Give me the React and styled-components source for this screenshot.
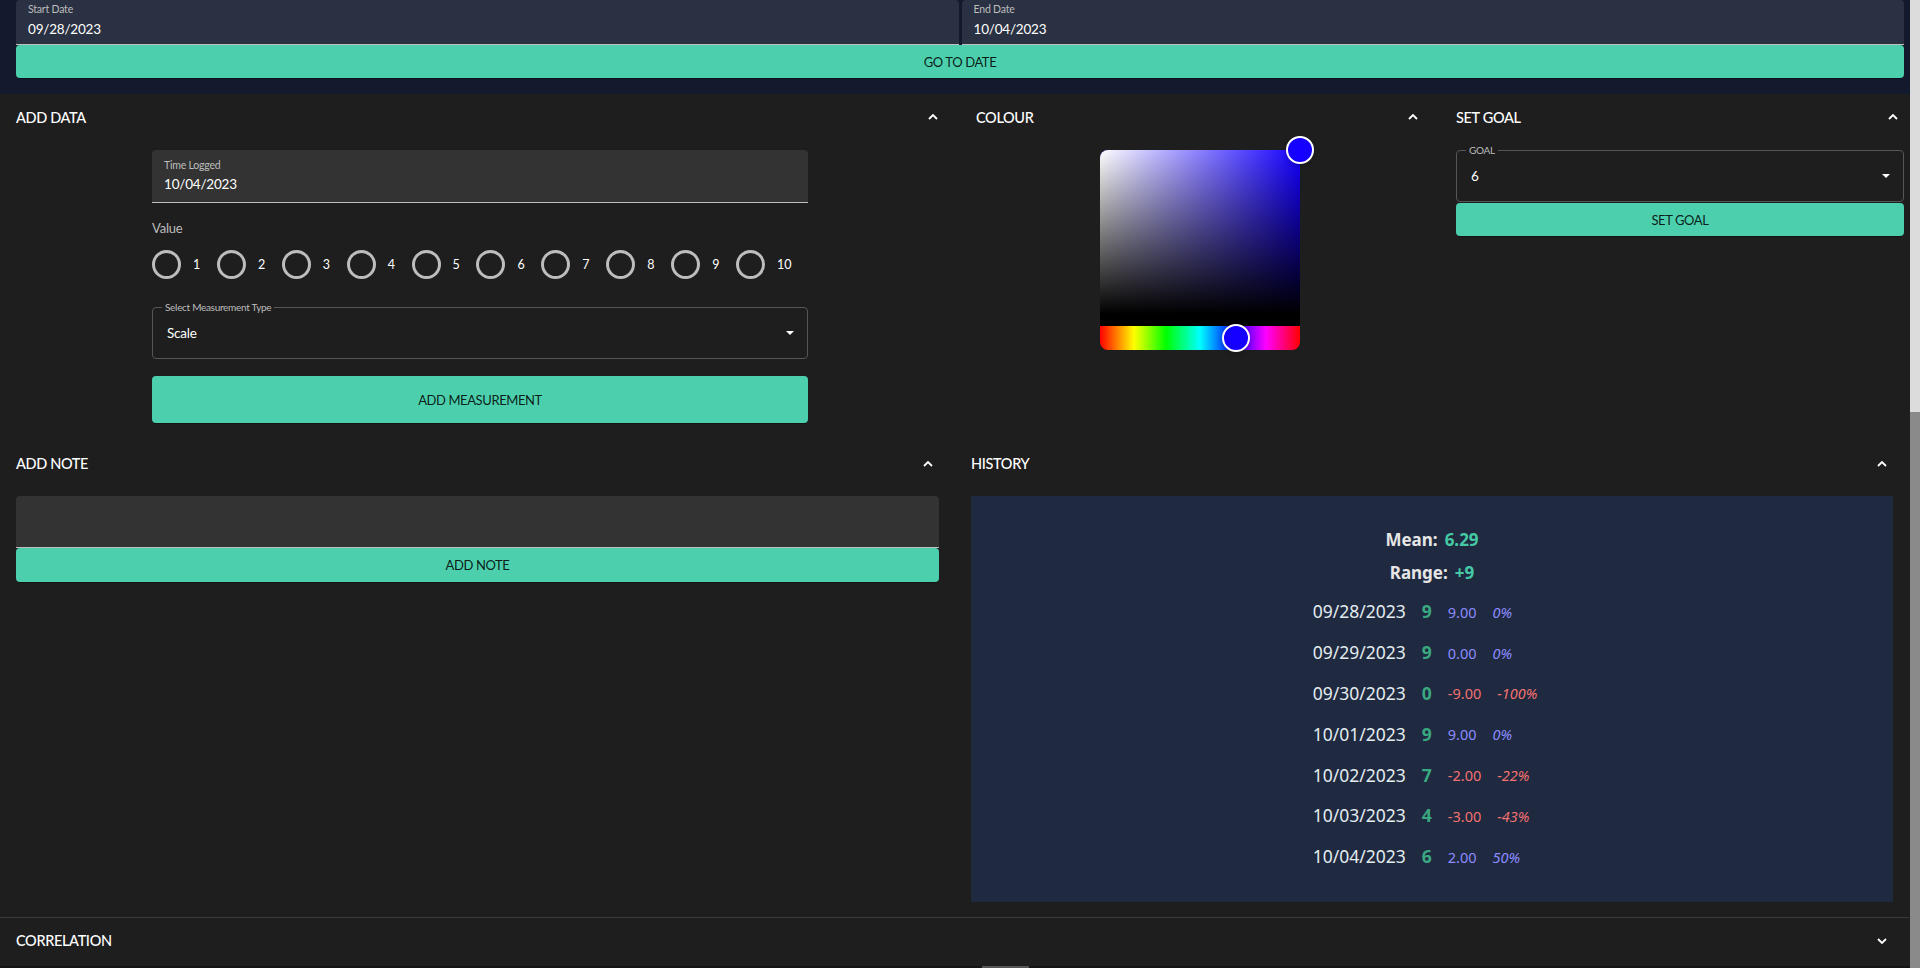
import React from "react";
import styled, { createGlobalStyle, css } from "styled-components";

const GlobalStyle = createGlobalStyle`
  html, body { margin: 0; padding: 0; background: #1e1e1e; overflow: hidden; }
  body { font-family: "Liberation Sans Narrow", "Lato", sans-serif; color: #fff; }
  * { box-sizing: border-box; }
`;

const Page = styled.div`
  width: 1920px;
  height: 968px;
  overflow: hidden;
  background: #1e1e1e;
`;

const DateBar = styled.div`
  background: #131a2e;
  padding: 0 16px 16px;
`;

const DateGrid = styled.div`
  display: grid;
  grid-template-columns: 1fr 1fr;
  column-gap: 3px;
`;

const FilledField = styled.div`
  display: flex;
  flex-direction: column;
  height: ${(p) => p.$h}px;
  padding: ${(p) => p.$pt}px 12px 0;
  background: ${(p) => (p.$tone === "navy" ? "#2a3142" : "#333333")};
  border-bottom: 1px solid #bdbdbd;
  border-radius: 4px 4px 0 0;
`;

const FieldLabel = styled.span`
  font-size: 10.5px;
  line-height: 12px;
  letter-spacing: -0.2px;
  color: #bdbdbd;
`;

const FieldValue = styled.span`
  font-size: 13.5px;
  line-height: 16px;
  letter-spacing: -0.2px;
  margin-top: ${(p) => p.$mt}px;
  color: #fff;
`;

const Button = styled.button`
  display: flex;
  align-items: center;
  justify-content: center;
  width: 100%;
  height: ${(p) => p.$h}px;
  margin-top: ${(p) => p.$mt || 0}px;
  border: none;
  border-radius: 4px;
  background: #4ccfad;
  color: rgba(0, 0, 0, 0.87);
  font-family: inherit;
  font-size: 13px;
  letter-spacing: -0.4px;
  text-transform: uppercase;
  box-shadow: 0 2px 1px -1px rgba(0, 0, 0, 0.2), 0 1px 1px rgba(0, 0, 0, 0.14);
  cursor: pointer;
`;

const TopRow = styled.div`
  display: grid;
  grid-template-columns: 960px 480px 480px;
`;

const MidRow = styled.div`
  display: grid;
  grid-template-columns: 955px 954px;
`;

const Panel = styled.section`
  display: flex;
  flex-direction: column;
  min-width: 0;
  ${(p) =>
    p.$divider &&
    css`
      border-top: 1px solid #3a3a3a;
      width: 1909px;
    `}
`;

const PanelHeader = styled.div`
  display: flex;
  align-items: center;
  justify-content: space-between;
  height: ${(p) => p.$h || 46}px;
  padding: 0 22px 0 16px;
`;

const Title = styled.h2`
  margin: 0;
  font-size: 14.5px;
  font-weight: 500;
  letter-spacing: -0.35px;
  color: #fff;
  text-transform: uppercase;
`;

const PanelBody = styled.div`
  padding: 10px 16px ${(p) => p.$pb || 16}px;
`;

const Centered = styled.div`
  width: ${(p) => p.$w}px;
  margin: 0 auto;
  display: flex;
  flex-direction: column;
`;

const SectionLabel = styled.span`
  margin-top: 15px;
  font-size: 13px;
  line-height: 20px;
  letter-spacing: -0.2px;
  color: #bdbdbd;
`;

const RadioRow = styled.div`
  display: flex;
  align-items: center;
  height: 42px;
  margin-top: 5px;
`;

const RadioItem = styled.label`
  display: flex;
  align-items: center;
  width: 64.9px;
  flex: none;
`;

const RadioCircle = styled.span`
  width: 29px;
  height: 29px;
  flex: none;
  border: 3px solid #bdbdbd;
  border-radius: 50%;
`;

const RadioText = styled.span`
  margin-left: 12px;
  font-size: 12.5px;
  color: #fff;
`;

const OutlinedSelect = styled.div`
  position: relative;
  display: flex;
  align-items: center;
  justify-content: space-between;
  height: 52px;
  margin-top: ${(p) => p.$mt || 0}px;
  padding: 0 14px;
  border: 1px solid #555555;
  border-radius: 4px;
`;

const NotchLabel = styled.span`
  position: absolute;
  top: -7px;
  left: 9px;
  padding: 0 3px;
  background: #1e1e1e;
  font-size: 10px;
  line-height: 12px;
  letter-spacing: -0.3px;
  color: #bdbdbd;
`;

const SelectValue = styled.span`
  font-size: 13.5px;
  letter-spacing: -0.2px;
  color: #fff;
`;

const Caret = styled.svg`
  flex: none;
  margin-right: -1px;
`;

const PickerWrap = styled.div`
  width: 200px;
  height: 200px;
  margin: 0 auto;
  display: flex;
  flex-direction: column;
`;

const Saturation = styled.div`
  position: relative;
  flex: 1;
  border-radius: 8px 8px 0 0;
  border-bottom: 12px solid #000;
  background: linear-gradient(to top, #000, rgba(0, 0, 0, 0)),
    linear-gradient(to right, #fff, rgba(255, 255, 255, 0)), ${(p) => p.$base};
`;

const HueBar = styled.div`
  position: relative;
  height: 24px;
  border-radius: 0 0 8px 8px;
  background: linear-gradient(
    to right,
    #f00 0%,
    #ff0 17%,
    #0f0 33%,
    #0ff 50%,
    #00f 67%,
    #f0f 83%,
    #f00 100%
  );
`;

const Pointer = styled.span`
  position: absolute;
  z-index: 2;
  width: 28px;
  height: 28px;
  transform: translate(-50%, -50%);
  border: 2px solid #fff;
  border-radius: 50%;
  box-shadow: 0 2px 4px rgba(0, 0, 0, 0.2);
  background: ${(p) => p.$color};
`;

const NoteArea = styled.div`
  height: 52px;
  background: #333333;
  border-bottom: 1px solid #bdbdbd;
  border-radius: 4px 4px 0 0;
`;

const StatsBox = styled.div`
  height: 406px;
  background: #1f2940;
  padding-top: 27px;
  display: flex;
  flex-direction: column;
  align-items: center;
  font-family: "Noto Sans", "Open Sans", sans-serif;
`;

const StatLine = styled.div`
  line-height: 33px;
  font-size: 17px;
  font-weight: 700;
  color: #e6e6e6;
`;

const StatValue = styled.span`
  margin-left: 7px;
  color: #45c9a5;
`;

const RowList = styled.div`
  margin-top: 2px;
  padding-right: 14px;
  display: flex;
  flex-direction: column;
  align-items: flex-start;
`;

const HistRow = styled.div`
  display: flex;
  align-items: center;
  height: 40.8px;
`;

const HistDate = styled.span`
  font-size: 17.5px;
  line-height: 24px;
  color: #e3ecef;
`;

const HistVal = styled.span`
  margin-left: 16px;
  font-size: 17.5px;
  line-height: 24px;
  font-weight: 700;
  color: #3aa880;
`;

const HistDiff = styled.span`
  margin-left: 16px;
  font-size: 14.5px;
  line-height: 24px;
  padding-top: 1px;
  font-style: ${(p) => (p.$italic ? "italic" : "normal")};
  color: ${(p) => (p.$neg ? "#f2726f" : "#8c8cff")};
`;

const ScrollTrack = styled.div`
  position: fixed;
  top: 0;
  right: 0;
  width: 10px;
  height: 968px;
  background: #dcdcdc;
  z-index: 10;
`;

const ScrollThumb = styled.div`
  position: absolute;
  left: 0;
  right: 0;
  top: 412px;
  bottom: 0;
  background: #8a8a8a;
`;

const HScroll = styled.div`
  position: fixed;
  left: 0;
  bottom: 0;
  width: 1910px;
  height: 2px;
  background: #141414;
  z-index: 10;
`;

const HThumb = styled.div`
  position: absolute;
  left: 982px;
  top: 0;
  width: 47px;
  height: 2px;
  background: #555;
`;

const Chevron = ({ down }) => (
  <svg width="10" height="6" viewBox="0 0 10 6" aria-hidden="true">
    <polyline
      points={down ? "1,1 5,5 9,1" : "1,5 5,1 9,5"}
      fill="none"
      stroke="#fff"
      strokeWidth="1.8"
    />
  </svg>
);

const DropCaret = () => (
  <Caret width="8" height="4" viewBox="0 0 8 4" aria-hidden="true">
    <polygon points="0,0 8,0 4,4" fill="#fff" />
  </Caret>
);

const history = [
  { d: "09/28/2023", v: 9, diff: "9.00", pct: "0%", neg: false },
  { d: "09/29/2023", v: 9, diff: "0.00", pct: "0%", neg: false },
  { d: "09/30/2023", v: 0, diff: "-9.00", pct: "-100%", neg: true },
  { d: "10/01/2023", v: 9, diff: "9.00", pct: "0%", neg: false },
  { d: "10/02/2023", v: 7, diff: "-2.00", pct: "-22%", neg: true },
  { d: "10/03/2023", v: 4, diff: "-3.00", pct: "-43%", neg: true },
  { d: "10/04/2023", v: 6, diff: "2.00", pct: "50%", neg: false },
];

const hue = 245;
const pickColor = `hsl(${hue}, 100%, 50%)`;

export default function App() {
  return (
    <Page>
      <GlobalStyle />
      <DateBar>
        <DateGrid>
          <FilledField $tone="navy" $h={45} $pt={3}>
            <FieldLabel>Start Date</FieldLabel>
            <FieldValue $mt={6}>09/28/2023</FieldValue>
          </FilledField>
          <FilledField $tone="navy" $h={45} $pt={3}>
            <FieldLabel>End Date</FieldLabel>
            <FieldValue $mt={6}>10/04/2023</FieldValue>
          </FilledField>
        </DateGrid>
        <Button $h={33}>Go to date</Button>
      </DateBar>

      <TopRow>
        <Panel>
          <PanelHeader>
            <Title>Add Data</Title>
            <Chevron />
          </PanelHeader>
          <PanelBody $pb={18}>
            <Centered $w={656}>
              <FilledField $h={53} $pt={9}>
                <FieldLabel>Time Logged</FieldLabel>
                <FieldValue $mt={5}>10/04/2023</FieldValue>
              </FilledField>
              <SectionLabel>Value</SectionLabel>
              <RadioRow>
                {[1, 2, 3, 4, 5, 6, 7, 8, 9, 10].map((n) => (
                  <RadioItem key={n}>
                    <RadioCircle />
                    <RadioText>{n}</RadioText>
                  </RadioItem>
                ))}
              </RadioRow>
              <OutlinedSelect $mt={22}>
                <NotchLabel>Select Measurement Type</NotchLabel>
                <SelectValue>Scale</SelectValue>
                <DropCaret />
              </OutlinedSelect>
              <Button $h={47} $mt={17}>Add Measurement</Button>
            </Centered>
          </PanelBody>
        </Panel>

        <Panel>
          <PanelHeader>
            <Title>Colour</Title>
            <Chevron />
          </PanelHeader>
          <PanelBody>
            <PickerWrap>
              <Saturation $base={pickColor}>
                <Pointer $color={pickColor} style={{ left: "100%", top: "0%" }} />
              </Saturation>
              <HueBar>
                <Pointer $color={pickColor} style={{ left: `${(hue / 360) * 100}%`, top: "50%" }} />
              </HueBar>
            </PickerWrap>
          </PanelBody>
        </Panel>

        <Panel>
          <PanelHeader>
            <Title>Set Goal</Title>
            <Chevron />
          </PanelHeader>
          <PanelBody>
            <OutlinedSelect>
              <NotchLabel>GOAL</NotchLabel>
              <SelectValue>6</SelectValue>
              <DropCaret />
            </OutlinedSelect>
            <Button $h={33} $mt={1}>Set goal</Button>
          </PanelBody>
        </Panel>
      </TopRow>

      <MidRow>
        <Panel>
          <PanelHeader $h={45}>
            <Title>Add Note</Title>
            <Chevron />
          </PanelHeader>
          <PanelBody>
            <NoteArea />
            <Button $h={34}>Add note</Button>
          </PanelBody>
        </Panel>

        <Panel>
          <PanelHeader $h={45}>
            <Title>History</Title>
            <Chevron />
          </PanelHeader>
          <PanelBody $pb={15}>
            <StatsBox>
              <StatLine>
                Mean:<StatValue>6.29</StatValue>
              </StatLine>
              <StatLine>
                Range:<StatValue>+9</StatValue>
              </StatLine>
              <RowList>
                {history.map((r) => (
                  <HistRow key={r.d}>
                    <HistDate>{r.d}</HistDate>
                    <HistVal>{r.v}</HistVal>
                    <HistDiff $neg={r.neg}>{r.diff}</HistDiff>
                    <HistDiff $neg={r.neg} $italic>
                      {r.pct}
                    </HistDiff>
                  </HistRow>
                ))}
              </RowList>
            </StatsBox>
          </PanelBody>
        </Panel>
      </MidRow>

      <Panel $divider>
        <PanelHeader $h={45}>
          <Title>Correlation</Title>
          <Chevron down />
        </PanelHeader>
      </Panel>

      <ScrollTrack>
        <ScrollThumb />
      </ScrollTrack>
      <HScroll>
        <HThumb />
      </HScroll>
    </Page>
  );
}
